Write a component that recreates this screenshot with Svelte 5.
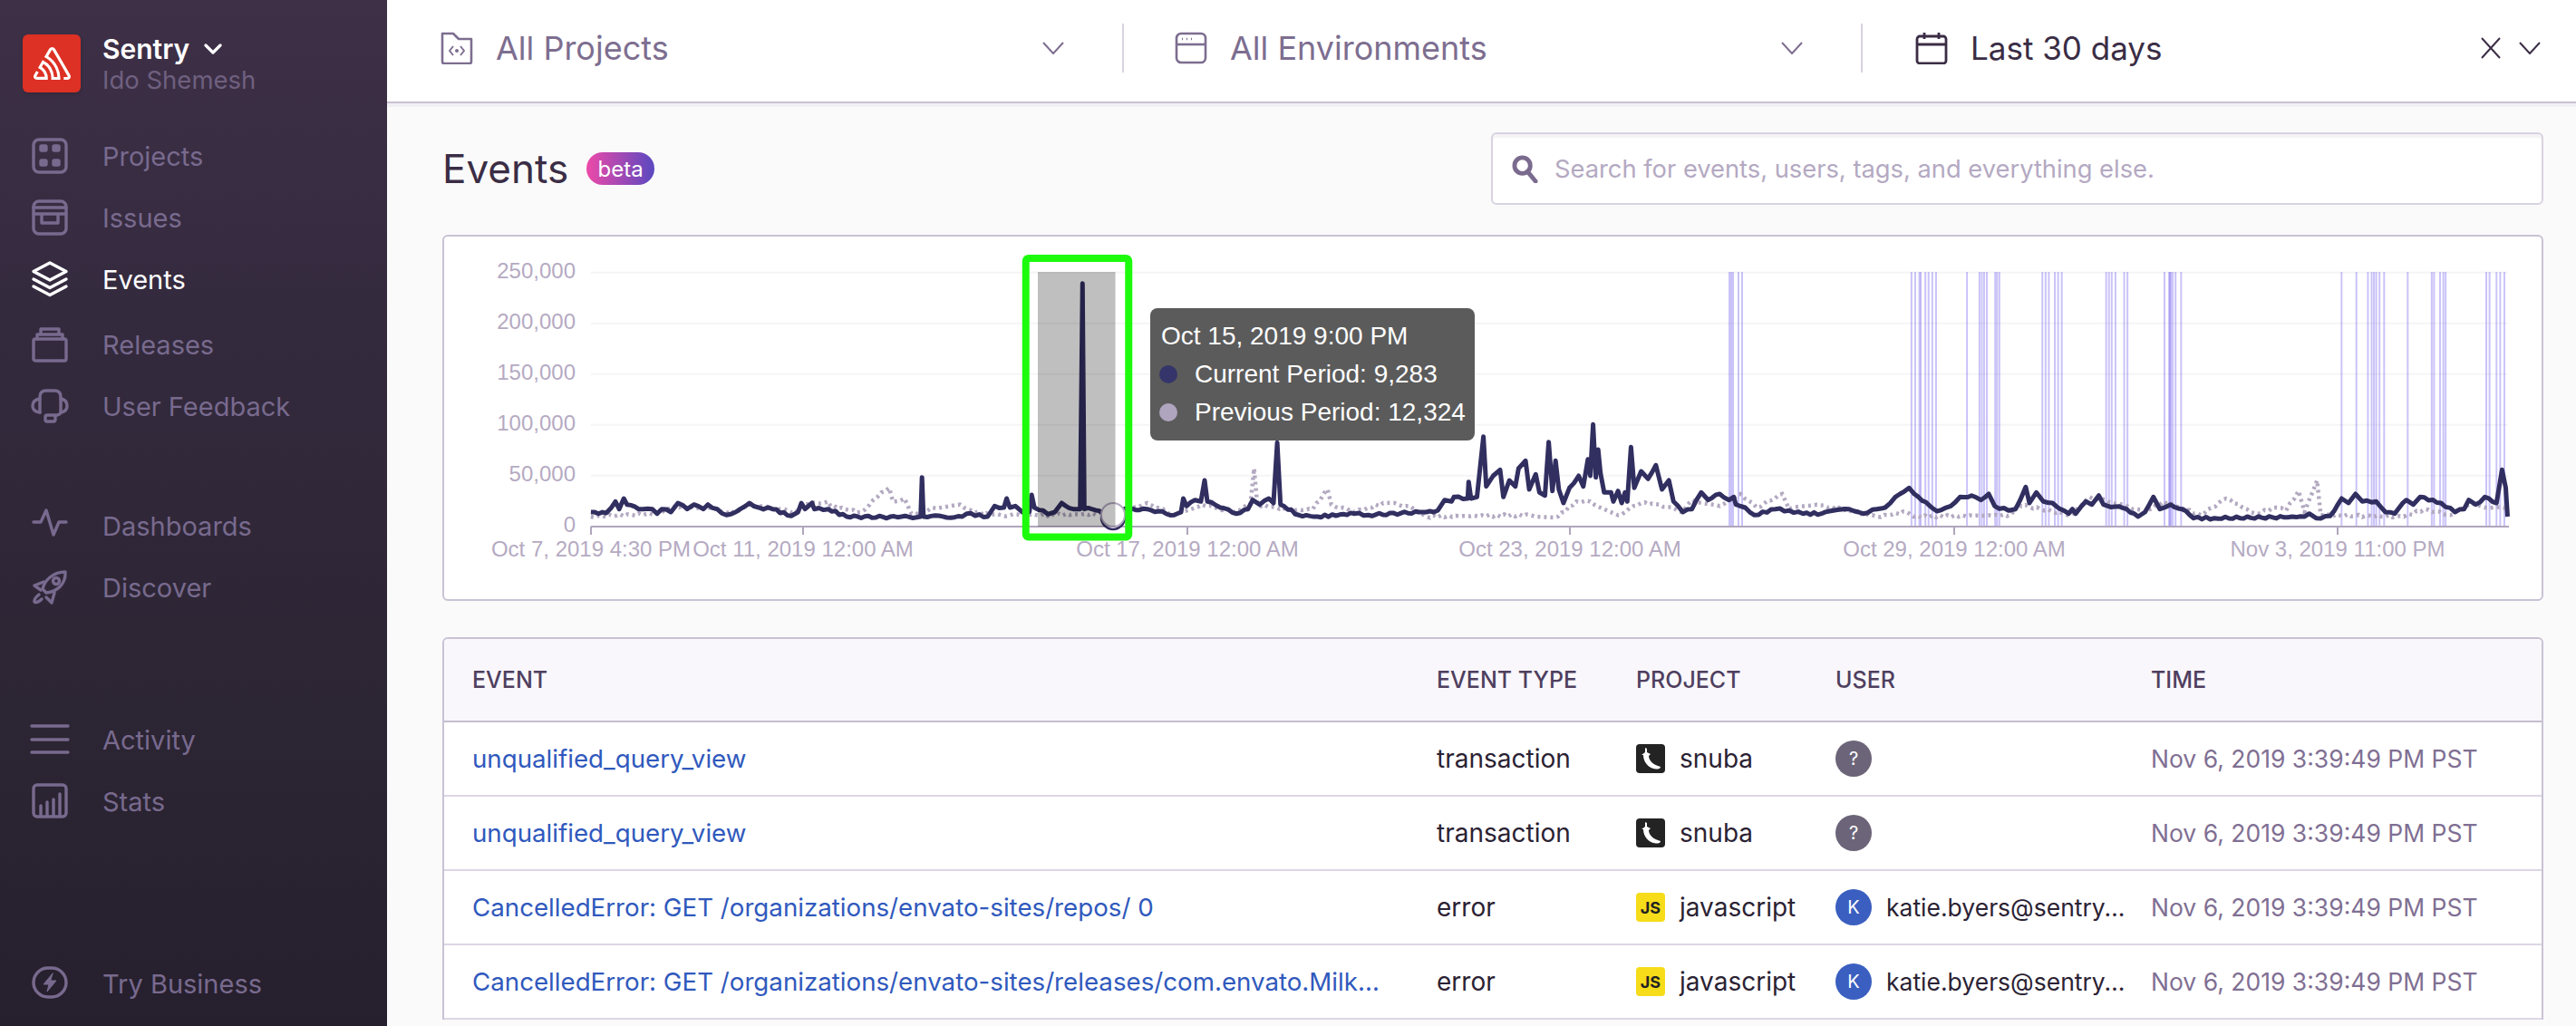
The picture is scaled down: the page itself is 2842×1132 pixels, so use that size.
<script lang="ts">
  type Pt = [number, number];

  const navTop = [
    { label: 'Projects', icon: 'projects' },
    { label: 'Issues', icon: 'issues' },
    { label: 'Events', icon: 'events', active: true },
    { label: 'Releases', icon: 'releases' },
    { label: 'User Feedback', icon: 'feedback' }
  ];
  const navMid = [
    { label: 'Dashboards', icon: 'dashboards' },
    { label: 'Discover', icon: 'discover' }
  ];
  const navLow = [
    { label: 'Activity', icon: 'activity' },
    { label: 'Stats', icon: 'stats' }
  ];

  const rows = [
    { title: 'unqualified_query_view', type: 'transaction', project: 'snuba', user: '' },
    { title: 'unqualified_query_view', type: 'transaction', project: 'snuba', user: '' },
    { title: 'CancelledError: GET /organizations/envato-sites/repos/ 0', type: 'error', project: 'javascript', user: 'katie.byers@sentry.io' },
    { title: 'CancelledError: GET /organizations/envato-sites/releases/com.envato.MilksHake.frontend', type: 'error', project: 'javascript', user: 'katie.byers@sentry.io' }
  ];
  const time = 'Nov 6, 2019 3:39:49 PM PST';

  // chart points were read off three crops, flat [x, y] lists in crop space
  const a = (off: number, list: number[]): Pt[] => {
    const out: Pt[] = [];
    for (let i = 0; i < list.length; i += 2) out.push([off + list[i] / 1.96, 260 + list[i + 1] / 3]);
    return out;
  };

  const current: Pt[] = [
    ...a(480, [337,915,370,918,390,880,398,905,408,870,415,890,440,905,470,905,480,920,490,905,510,915,525,885,545,905,560,890,580,905,590,890,610,905,630,925,650,915,680,885,700,900,730,905,770,928,785,915,792,885,800,905,815,885,820,905,850,905,890,930,1000,932,1050,930,1053,800,1056,930,1140,930,1150,920,1195,930,1210,895,1230,900,1236,870,1243,900,1255,895,1270,915,1285,915,1290,858,1296,900,1315,910,1325,922,1340,915,1355,885,1380,905,1395,905,1400,158,1404,905,1420,905,1445,920,1470,925,1490,905,1540,905]),
    ...a(1280, [30,925,45,915,50,870,57,895,75,875,88,880,96,810,102,880,130,900,165,920,190,905,200,875,215,890,235,870,245,885,253,685,260,890,300,925,340,930,420,920,450,925,560,915,575,915,600,910,615,875,630,880,635,865,665,870,667,815,672,870,685,865,699,665,705,830,720,795,735,775,742,865,755,810,768,830,775,770,790,745,798,840,812,790,820,850,832,860,840,683,848,845,855,745,862,840,872,885,885,835,905,795,915,830,925,740,930,795,936,625,942,800,947,708,952,785,960,850,975,850,980,880,990,845,998,885,1005,850,1010,880,1018,700,1025,835,1040,780,1055,805,1072,760,1085,840,1100,810,1110,880,1130,915,1150,905,1170,850,1185,875,1210,855,1230,875,1240,865,1245,890,1265,900,1285,925,1330,905,1360,910,1390,920,1430,920,1490,905,1520,920,1550,905]),
    ...a(2040, [78,900,100,865,130,835,150,865,190,912,220,895,240,865,265,860,285,875,302,855,315,895,345,910,360,905,370,875,382,832,390,885,405,850,420,880,440,885,465,910,475,920,483,905,490,920,512,880,525,890,540,860,550,890,600,905,625,930,640,915,658,865,672,905,695,890,720,905,745,935,790,935,940,932,985,930,995,920,1010,935,1040,928,1065,870,1080,885,1095,855,1110,880,1140,880,1160,915,1180,920,1205,875,1220,890,1235,865,1280,885,1310,915,1330,905,1340,875,1355,890,1375,865,1400,885,1412,775,1420,835,1424,930])
  ];

  const previous: Pt[] = [
    ...a(480, [337,930,480,920,520,895,600,905,640,920,680,890,780,915,800,890,850,880,855,895,920,915,940,890,965,850,982,835,990,880,1015,870,1030,920,1060,915,1075,900,1135,890,1160,910,1200,925,1300,925,1470,920,1540,885]),
    ...a(1280, [30,925,90,890,160,915,195,890,203,770,210,890,290,910,330,905,362,840,370,890,420,915,450,900,490,885,540,895,575,930,800,925,860,930,900,880,930,880,990,925,1040,885,1080,890,1130,915,1150,875,1210,895,1255,855,1290,900,1345,855,1360,905,1420,890,1540,925]),
    ...a(2040, [60,930,125,915,140,930,350,925,365,890,480,925,520,865,590,890,640,915,680,880,760,925,815,870,860,905,880,920,925,900,945,910,972,845,985,915,1012,810,1020,925,1200,930,1245,905,1300,925,1340,890,1424,905])
  ];

  // fill long stretches with a small wobble so the line looks like real data
  function toPath(pts: Pt[]): string {
    let d = `M${pts[0][0].toFixed(1)} ${pts[0][1].toFixed(1)}`;
    for (let i = 1; i < pts.length; i++) {
      const [x0, y0] = pts[i - 1];
      const [x1, y1] = pts[i];
      const steps = Math.floor((x1 - x0) / 4);
      for (let s = 1; s < steps; s++) {
        const x = x0 + ((x1 - x0) * s) / steps;
        const y = y0 + ((y1 - y0) * s) / steps + Math.sin(x * 12.9898) * 1.3;
        d += `L${x.toFixed(1)} ${y.toFixed(1)}`;
      }
      d += `L${x1.toFixed(1)} ${y1.toFixed(1)}`;
    }
    return d;
  }

  const markerCrop = [135,143,152,155,165,172,180,188,255,282,287,292,298,316,320,325,418,425,432,445,452,460,556,562,568,576,595,602,682,692,694,696,700,706,718,1065,1097,1122,1130,1135,1140,1147,1157,1208,1260,1265,1278,1285,1290,1378,1385,1400,1408,1417];
  const markers = [1908, 1910, 1912, 1918, 1922, ...markerCrop.map((x) => 2040 + x / 1.96)];

  const yAxis = ['250,000', '200,000', '150,000', '100,000', '50,000', '0'];
  const yOf = (i: number) => 300.7 + i * 56;
  const xAxis: [number, string][] = [
    [652, 'Oct 7, 2019 4:30 PM'],
    [886, 'Oct 11, 2019 12:00 AM'],
    [1310, 'Oct 17, 2019 12:00 AM'],
    [1732, 'Oct 23, 2019 12:00 AM'],
    [2156, 'Oct 29, 2019 12:00 AM'],
    [2579, 'Nov 3, 2019 11:00 PM']
  ];
</script>

{#snippet navIcon(name: string)}
  <svg class="nav-icon" viewBox="0 0 44 40" fill="none" stroke="currentColor" stroke-width="3.4" stroke-linecap="round" stroke-linejoin="round">
    {#if name === 'projects'}
      <rect x="4" y="2" width="36" height="36" rx="6" />
      <rect x="12" y="9" width="6" height="5" rx="1" fill="currentColor" />
      <rect x="26" y="9" width="6" height="5" rx="1" fill="currentColor" />
      <rect x="12" y="25" width="6" height="5" rx="1" fill="currentColor" />
      <rect x="26" y="25" width="6" height="5" rx="1" fill="currentColor" />
    {:else if name === 'issues'}
      <rect x="4" y="2" width="36" height="36" rx="6" />
      <path d="M4 9H40M4 16H40M13 16V26H31V16" />
    {:else if name === 'events'}
      <path d="M22 2L40 11.5L22 21L4 11.5Z" />
      <path d="M4 20L22 29.5L40 20M4 28L22 37.5L40 28" />
    {:else if name === 'releases'}
      <rect x="4" y="14" width="36" height="24" rx="2" />
      <path d="M8 14V9H36V14M12 9V3H32V9" />
    {:else if name === 'feedback'}
      <path d="M11 27V10Q11 3 18 3H27Q34 3 34 10V27Q34 29 30 30H28" />
      <path d="M11 12Q3 13 3 20Q3 26 11 27M34 12Q41 13 41 20Q41 26 34 27" />
      <rect x="17" y="30" width="11" height="7" rx="2" />
    {:else if name === 'dashboards'}
      <path d="M4 16H12L18 3L26 30L32 16H40" />
    {:else if name === 'discover'}
      <path d="M18 26L14 22C16 12 26 3 39 3C40 16 30 25 18 26Z" />
      <circle cx="29" cy="13" r="3.5" />
      <path d="M15 14L5 18L12 23M27 26L24 37L18 31M10 28Q4 33 5 36Q8 38 13 33" />
    {:else if name === 'activity'}
      <path d="M2 5H42M2 20H42M2 34H42" />
    {:else if name === 'stats'}
      <rect x="4" y="2" width="36" height="35" rx="4" />
      <path d="M12 36V25M19 36V21M26 36V18M33 36V12" />
    {:else if name === 'business'}
      <rect x="4" y="3" width="36" height="32" rx="16" />
      <path d="M25 9L15 21H21L19 29L29 17H23Z" fill="currentColor" stroke-width="1" />
    {/if}
  </svg>
{/snippet}

{#snippet chevron(cls: string)}
  <svg class={cls} viewBox="0 0 24 14" fill="none" stroke="currentColor" stroke-width="2"><path d="M1 1L12 13L23 1" /></svg>
{/snippet}

<div class="page">
  <aside class="sidebar">
    <div class="org">
      <div class="logo">
        <svg viewBox="0 0 50 44" width="41" height="36"><path fill="#fff" d="M29,2.26a4.67,4.67,0,0,0-8,0L14.42,13.53A32.21,32.21,0,0,1,32.17,40.19H27.55A27.68,27.68,0,0,0,12.09,17.47L6,28a15.92,15.92,0,0,1,9.23,12.17H4.62A.76.76,0,0,1,4,39.06l2.94-5a10.74,10.74,0,0,0-3.36-1.9l-2.91,5a4.54,4.54,0,0,0,1.69,6.24A4.66,4.66,0,0,0,4.62,44H19.15a19.4,19.4,0,0,0-8-17.31l2.31-4A23.87,23.87,0,0,1,23.76,44H36.07a35.88,35.88,0,0,0-16.41-31.8l4.67-8a.77.77,0,0,1,1.05-.27c.53.29,20.29,34.77,20.66,35.17a.76.76,0,0,1-.68,1.13H40.6q.09,1.91,0,3.81h4.78A4.59,4.59,0,0,0,50,39.43a4.49,4.49,0,0,0-.62-2.28Z" /></svg>
      </div>
      <div class="org-text">
        <div class="org-name">Sentry
          <svg class="org-caret" viewBox="0 0 20 12" fill="none" stroke="currentColor" stroke-width="3.2" stroke-linecap="round" stroke-linejoin="round"><path d="M2 2L10 10L18 2" /></svg>
        </div>
        <div class="org-user">Ido Shemesh</div>
      </div>
    </div>

    <nav class="nav nav-top">
      {#each navTop as item}
        <div class="nav-row" class:active={item.active}>{@render navIcon(item.icon)}<span>{item.label}</span></div>
      {/each}
    </nav>
    <nav class="nav nav-mid">
      {#each navMid as item}
        <div class="nav-row">{@render navIcon(item.icon)}<span>{item.label}</span></div>
      {/each}
    </nav>
    <nav class="nav nav-low">
      {#each navLow as item}
        <div class="nav-row">{@render navIcon(item.icon)}<span>{item.label}</span></div>
      {/each}
    </nav>
    <nav class="nav nav-end">
      <div class="nav-row">{@render navIcon('business')}<span>Try Business</span></div>
    </nav>
  </aside>

  <main class="main">
    <header class="topbar">
      <div class="selector sel-projects">
        <svg class="top-icon" viewBox="0 0 36 36" fill="none" stroke="currentColor" stroke-width="2.6" stroke-linejoin="round">
          <path d="M2 33V2H14L20 8H34V33Q34 35 32 35H4Q2 35 2 33Z" />
          <path d="M14 16L10 21L14 26M22 16L26 21L22 26" stroke-width="2" />
          <circle cx="18" cy="21" r="2" fill="currentColor" stroke="none" />
        </svg>
        <span class="sel-label">All Projects</span>
        {@render chevron('sel-caret')}
      </div>
      <div class="selector sel-env">
        <svg class="top-icon" viewBox="0 0 36 36" fill="none" stroke="currentColor" stroke-width="2.6">
          <rect x="2" y="2" width="32" height="32" rx="5" />
          <path d="M2 14H34" />
          <path d="M8 8H9M13 8H14M18 8H19" stroke-width="2.4" />
        </svg>
        <span class="sel-label">All Environments</span>
        {@render chevron('sel-caret')}
      </div>
      <div class="selector sel-date">
        <svg class="top-icon" viewBox="0 0 36 36" fill="none" stroke="currentColor" stroke-width="2.8">
          <rect x="2" y="5" width="32" height="30" rx="3" />
          <path d="M2 14H34M10 1V8M26 1V8" />
        </svg>
        <span class="sel-label">Last 30 days</span>
        <svg class="sel-close" viewBox="0 0 24 24" fill="none" stroke="currentColor" stroke-width="2"><path d="M2 1L22 23M22 1L2 23" /></svg>
        {@render chevron('sel-caret')}
      </div>
    </header>

    <section class="content">
      <div class="title-row">
        <div class="title"><h1>Events</h1><span class="beta">beta</span></div>
        <div class="search">
          <svg class="search-icon" viewBox="0 0 30 32" fill="none" stroke="currentColor"><circle cx="12" cy="12" r="9" stroke-width="5" /><path d="M18 19L27 30" stroke-width="5" stroke-linecap="round" /></svg>
          <span>Search for events, users, tags, and everything else.</span>
        </div>
      </div>

      <div class="panel chart">
        <svg class="plot" viewBox="488 259 2318 404">
          {#each yAxis as label, i}
            {#if i < 5}<line x1="652" x2="2767" y1={yOf(i)} y2={yOf(i)} stroke="#f5f4f6" stroke-width="2" />{/if}
            <text x="635" y={yOf(i) + 6} text-anchor="end" class="axis">{label}</text>
          {/each}
          {#each markers as x}
            <line x1={x} x2={x} y1="300" y2="581" stroke="#7b68ee" stroke-opacity="0.4" stroke-width="2" />
          {/each}
          <path d={toPath(previous)} fill="none" stroke="#b3a9c1" stroke-width="4.5" stroke-dasharray="3 4" />
          <path d={toPath(current)} fill="none" stroke="#312e60" stroke-width="5" stroke-linejoin="round" />
          <line x1="652" x2="2768" y1="581" y2="581" stroke="#b0a6bd" stroke-width="2" />
          {#each xAxis as [x, label]}
            <line x1={x} x2={x} y1="581" y2="590" stroke="#b0a6bd" stroke-width="2" />
            <text x={x} y="614" text-anchor="middle" class="axis">{label}</text>
          {/each}
          <circle cx="1228" cy="571" r="13" fill="none" stroke="#312e60" stroke-width="2.5" />
          <circle cx="1228" cy="568" r="13" fill="#fff" stroke="#b3a9c1" stroke-width="2" />
          <rect x="1145" y="300" width="85.5" height="281" fill="#000" fill-opacity="0.25" />
          <rect x="1131.75" y="285" width="113.5" height="307.5" rx="3" fill="none" stroke="#1cfb0c" stroke-width="8" />
        </svg>
        <div class="tooltip">
          <div class="tip-title">Oct 15, 2019 9:00 PM</div>
          <div class="tip-row"><i class="dot dot-now"></i>Current Period: 9,283</div>
          <div class="tip-row"><i class="dot dot-prev"></i>Previous Period: 12,324</div>
        </div>
      </div>

      <div class="panel table">
        <div class="row head">
          <div>Event</div>
          <div>Event Type</div>
          <div>Project</div>
          <div>User</div>
          <div>Time</div>
        </div>
        {#each rows as row}
          <div class="row">
            <div class="cell link">{row.title}</div>
            <div class="cell">{row.type}</div>
            <div class="cell project">
              {#if row.project === 'snuba'}
                <svg class="badge" viewBox="0 0 32 32"><rect width="32" height="32" rx="4" fill="#232323" /><path fill="#fff" d="M10 4L12 5L12 9L16 11L14 13C14 18 19 23 27 25C27 27 25 27.500 22 27.500C14 27 8 20 8 12L6 12L10 9Z" /></svg>
              {:else}
                <span class="badge js">JS</span>
              {/if}
              <span>{row.project}</span>
            </div>
            <div class="cell user">
              {#if row.user}
                <span class="avatar known">K</span><span class="user-name">{row.user}</span>
              {:else}
                <span class="avatar">?</span>
              {/if}
            </div>
            <div class="cell stamp">{time}</div>
          </div>
        {/each}
      </div>
    </section>
  </main>
</div>

<style>
  :global(body) {
    margin: 0;
    background: #fafafa;
  }

  .page {
    display: flex;
    height: 1132px;
    overflow: hidden;
    font-family: Inter, "Liberation Sans", sans-serif;
    color: #2b2233;
  }

  .sidebar {
    width: 427px;
    flex: none;
    display: flex;
    flex-direction: column;
    padding: 38px 0 0 25px;
    box-sizing: border-box;
    background: linear-gradient(180deg, #3e3047 0%, #342a3e 30%, #2c2533 70%, #261f2d 100%);
  }

  .org {
    display: flex;
    gap: 24px;
    height: 64px;
  }

  .logo {
    width: 64px;
    height: 64px;
    border-radius: 6px;
    background: #dc3124;
    display: flex;
    align-items: center;
    justify-content: center;
    box-shadow: 0 2px 4px rgba(0, 0, 0, 0.15);
  }

  .org-text {
    margin-top: -2px;
  }

  .org-name {
    font-size: 30px;
    font-weight: 600;
    line-height: 36px;
    color: #fff;
    display: flex;
    align-items: center;
    gap: 16px;
  }

  .org-caret {
    width: 20px;
    height: 12px;
  }

  .org-user {
    font-size: 27.500px;
    line-height: 32px;
    color: #6f6080;
  }

  .nav {
    display: flex;
    flex-direction: column;
  }

  .nav-top { margin-top: 36px; }
  .nav-mid { margin-top: 64px; }
  .nav-low { margin-top: 100px; }
  .nav-end { margin-top: 133px; }

  .nav-row {
    height: 68px;
    display: flex;
    align-items: center;
    gap: 36px;
    margin-left: 8px;
    font-size: 29px;
    color: #786a8e;
  }

  .nav-row.active {
    color: #fff;
  }

  .nav-top .nav-row:nth-child(4) {
    margin-top: 4px;
  }

  .nav-icon {
    width: 44px;
    height: 40px;
    flex: none;
  }

  .main {
    flex: 1;
    min-width: 0;
    display: flex;
    flex-direction: column;
  }

  .topbar {
    height: 112px;
    flex: none;
    display: flex;
    background: #fff;
    border-bottom: 2px solid #c9c1d3;
    box-shadow: 0 4px 0 #f1eff3;
    position: relative;
    box-sizing: content-box;
  }

  .selector {
    display: flex;
    align-items: center;
    height: 54px;
    margin-top: 26px;
    box-sizing: border-box;
    color: #7d6e90;
  }

  .sel-projects {
    width: 813px;
    padding-left: 59px;
    border-right: 2px solid #d8d3de;
  }

  .sel-env {
    width: 815px;
    padding-left: 56px;
    border-right: 2px solid #d8d3de;
  }

  .sel-date {
    flex: 1;
    padding-left: 58px;
    padding-right: 39px;
    color: #3a2d45;
  }

  .top-icon {
    width: 36px;
    height: 36px;
    flex: none;
    margin-right: 25px;
  }

  .sel-label {
    flex: 1;
    font-size: 36px;
  }

  .sel-date .sel-label {
    font-size: 35px;
  }

  .sel-caret {
    width: 24px;
    height: 14px;
    flex: none;
    margin-right: 64px;
  }

  .sel-date .sel-caret {
    margin-right: 0;
  }

  .sel-close {
    width: 24px;
    height: 24px;
    margin-right: 19px;
    flex: none;
  }

  .content {
    padding: 32px 36px 0 61px;
  }

  .title-row {
    display: flex;
    justify-content: space-between;
    align-items: center;
    height: 80px;
  }

  .title {
    display: flex;
    align-items: center;
    gap: 20px;
  }

  h1 {
    margin: 0;
    font-size: 44px;
    font-weight: 400;
    color: #3a2d45;
  }

  .beta {
    width: 75px;
    height: 36px;
    border-radius: 18px;
    display: flex;
    align-items: center;
    justify-content: center;
    font-size: 24px;
    color: #fff;
    background: linear-gradient(90deg, #ec4aa8 0%, #5a48c0 100%);
  }

  .search {
    width: 1161px;
    height: 80px;
    box-sizing: border-box;
    display: flex;
    align-items: center;
    gap: 18px;
    padding-left: 21px;
    background: #fff;
    border: 2px solid #d8d3e0;
    border-radius: 6px;
    box-shadow: inset 0 4px 0 #f4f3f5;
    font-size: 27.300px;
    color: #b4a9c2;
  }

  .search-icon {
    width: 29px;
    height: 31px;
    color: #7a6b8e;
  }

  .panel {
    background: #fff;
    border: 2px solid #c9c2d4;
    border-radius: 6px;
    box-sizing: border-box;
    width: 2318px;
  }

  .chart {
    position: relative;
    height: 404px;
    margin-top: 33px;
    overflow: hidden;
  }

  .plot {
    position: absolute;
    left: -2px;
    top: -2px;
    width: 2318px;
    height: 404px;
  }

  .axis {
    font-family: "Liberation Sans", Arial, sans-serif;
    font-size: 24px;
    fill: #b5aac2;
  }

  .tooltip {
    position: absolute;
    left: 779px;
    top: 79px;
    width: 358px;
    height: 146px;
    box-sizing: border-box;
    padding: 10px 10px;
    border-radius: 8px;
    background: #5b5b5b;
    color: #fff;
    font-family: "Liberation Sans", Arial, sans-serif;
    font-size: 28px;
    line-height: 42px;
    white-space: nowrap;
  }

  .tip-title {
    padding-left: 2px;
  }

  .tip-row {
    display: flex;
    align-items: center;
  }

  .dot {
    width: 20px;
    height: 20px;
    border-radius: 50%;
    margin-right: 19px;
    flex: none;
  }

  .dot-now { background: #35356b; }
  .dot-prev { background: #b0a5be; }

  .table {
    margin-top: 40px;
    border-bottom: 0;
    border-radius: 6px 6px 0 0;
  }

  .row {
    display: grid;
    grid-template-columns: 1064px 220px 220px 348px 1fr;
    align-items: center;
    height: 82px;
    padding-left: 31px;
    box-sizing: border-box;
    border-bottom: 2px solid #dcd6e4;
    font-size: 28px;
  }

  .row.head {
    height: 92px;
    background: #f9f7fb;
    border-bottom-color: #c5bdd0;
    border-radius: 6px 6px 0 0;
    font-size: 25px;
    font-weight: 500;
    text-transform: uppercase;
    color: #4f3f5f;
  }

  .cell {
    min-width: 0;
    white-space: nowrap;
    overflow: hidden;
    text-overflow: ellipsis;
  }

  .link {
    color: #3059bd;
    padding-right: 60px;
    font-size: 27.700px;
  }

  .project {
    display: flex;
    align-items: center;
    gap: 16px;
  }

  .badge {
    width: 32px;
    height: 32px;
    flex: none;
  }

  .js {
    border-radius: 4px;
    background: #f6dc19;
    color: #222;
    font-size: 18px;
    font-weight: 700;
    line-height: 34px;
    text-align: center;
  }

  .user {
    display: flex;
    align-items: center;
    gap: 16px;
    padding-right: 24px;
  }

  .avatar {
    width: 40px;
    height: 40px;
    flex: none;
    border-radius: 50%;
    background: #6c6478;
    color: #fff;
    font-size: 20px;
    display: flex;
    align-items: center;
    justify-content: center;
  }

  .avatar.known {
    background: #3a5fc0;
  }

  .user-name {
    min-width: 0;
    overflow: hidden;
    text-overflow: ellipsis;
    font-size: 26.500px;
    line-height: 36px;
  }

  .stamp {
    color: #7f6f93;
    font-size: 26.500px;
  }
</style>
